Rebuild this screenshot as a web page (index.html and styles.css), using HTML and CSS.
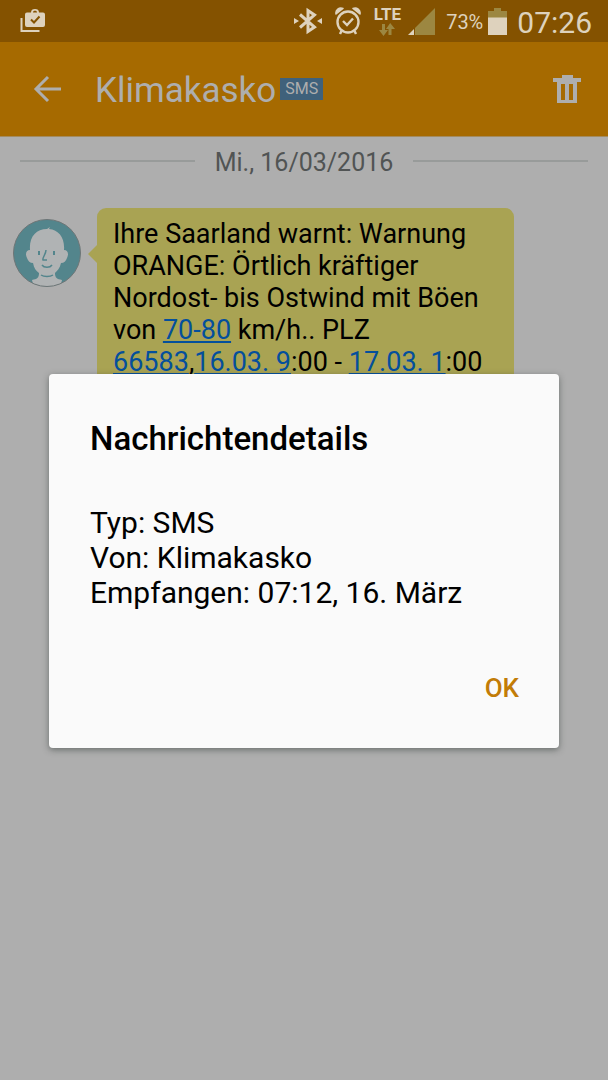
FILE: index.html
```html
<!DOCTYPE html>
<html lang="de">
<head>
    <meta charset="UTF-8">
    <meta name="viewport" content="width=device-width, initial-scale=1.0">
    <title>Klimakasko</title>
    <link rel="stylesheet" href="styles.css">
</head>
<body>
    <div class="status-bar">
        <svg class="icon-store" width="25" height="24" viewBox="0 0 25 24">
            <path d="M1.500 9v13h18" fill="none" stroke="#ded2bd" stroke-width="2"/>
            <path fill="#ded2bd" fill-rule="evenodd" d="M7 3.500h4C11 1 12.500 0 15 0s4 1 4 3.500h4a2 2 0 0 1 2 2V16a2 2 0 0 1-2 2H7a2 2 0 0 1-2-2V5.500a2 2 0 0 1 2-2zM13 3.500h4C17 2.300 16.300 1.700 15 1.700s-2 .6-2 1.800z"/>
            <path d="M11 10.500l3 3 5.500-6" fill="none" stroke="#845200" stroke-width="2"/>
        </svg>
        <div class="status-icons">
            <svg width="28" height="28" viewBox="0 0 28 28">
                <path d="M6 7.500L20.500 20L14 24.500V3.500L20.500 8L6 20.500" fill="none" stroke="#ded2bd" stroke-width="3"/>
                <path d="M0 11l5 3-5 3zM28 11l-5 3 5 3z" fill="#ded2bd"/>
            </svg>
            <svg width="26" height="28" viewBox="0 0 26 28">
                <g fill="none" stroke="#ded2bd">
                    <circle cx="13" cy="15" r="10.500" stroke-width="2.400"/>
                    <path d="M8 14l4 4 6-6.500" stroke-width="2.400"/>
                    <path d="M6.500 24l-1.500 3M19.500 24l1.500 3" stroke-width="2.500"/>
                </g>
                <path d="M1 7A5 5 0 0 1 8 1.500zM25 7A5 5 0 0 0 18 1.500z" fill="#ded2bd" stroke="#ded2bd" stroke-width="1.500" stroke-linejoin="round"/>
            </svg>
            <div class="network">
                <span>LTE</span>
                <svg width="16" height="13" viewBox="0 0 16 13">
                    <path d="M3 1h3v6h3L4.500 13 0 7h3zM9.500 12h3V6H16L11.200 0 7 6h2.500z" fill="#9c8741"/>
                </svg>
            </div>
            <svg class="icon-signal" width="27" height="27" viewBox="0 0 27 27">
                <path d="M27 0v27H7V20z" fill="#9c8741"/>
                <path d="M6 21v6H0z" fill="#ded2bd"/>
            </svg>
            <span class="percent">73%</span>
            <svg class="icon-battery" width="19" height="27" viewBox="0 0 19 27">
                <path d="M6 0h7v3h6v7H0V3h6z" fill="#9c8741"/>
                <path d="M0 9.500h19V27H0z" fill="#ded2bd"/>
            </svg>
            <time class="clock">07:26</time>
        </div>
    </div>

    <header class="top-bar">
        <button class="icon-btn" aria-label="Zurück">
            <svg width="28" height="28" viewBox="0 0 28 28">
                <path d="M15 2L3 14l12 12M3 14h25" fill="none" stroke="#aeaeae" stroke-width="3"/>
            </svg>
        </button>
        <h1>Klimakasko</h1>
        <span class="badge">SMS</span>
        <button class="icon-btn delete" aria-label="Löschen">
            <svg width="28" height="28" viewBox="0 0 28 28">
                <path fill="#aeaeae" fill-rule="evenodd" d="M9 0h11v3h8v4h-4v21H4V7H0V3h9zM8 9v16h4V9zM16 9v16h4V9z"/>
            </svg>
        </button>
    </header>

    <main>
        <div class="date">Mi., 16/03/2016</div>
        <div class="message">
            <svg class="avatar" width="68" height="68" viewBox="0 0 68 68">
                <clipPath id="circle"><circle cx="34" cy="34" r="33.500"/></clipPath>
                <circle cx="34" cy="34" r="33.500" fill="#53858c"/>
                <g clip-path="url(#circle)">
                    <path fill="#b0b3b4" d="M17 31C16 18 23 10 34 10l3-2-1 2c10 1 16 9 15 21 4 0 5 4 3 8-1 3-3 5-6 5-1 5-4 8-6 10 0 5 2 6 7 7l-2 8H21l-2-8c5-1 7-2 7-7-3-2-5-5-6-10-3 0-5-2-6-5-2-4-1-8 3-8z"/>
                </g>
                <path d="M33 31c0 4-4 8-3 10h4M29 46c2 3 8 3 10 0M28 56c3 2 9 2 12 0" fill="none" stroke="#53858c" stroke-width="1.500"/>
                <path d="M26 32v4M41 32v4" stroke="#53858c" stroke-width="2"/>
                <circle cx="34" cy="34" r="33.500" fill="none" stroke="#6e7677"/>
            </svg>
            <p class="bubble">Ihre Saarland warnt: Warnung ORANGE: Örtlich kräftiger Nordost- bis Ostwind mit Böen von <a href="#">70-80</a> km/h.. PLZ <a href="#">66583</a>,<a href="#">16.03. 9</a>:00 - <a href="#">17.03. 1</a>:00</p>
        </div>
    </main>

    <div class="overlay">
        <div class="dialog" role="dialog" aria-labelledby="dialog-title">
            <h2 id="dialog-title">Nachrichtendetails</h2>
            <ul>
                <li>Typ: SMS</li>
                <li>Von: Klimakasko</li>
                <li>Empfangen: 07:12, 16. März</li>
            </ul>
            <button class="ok">OK</button>
        </div>
    </div>
</body>
</html>
```

FILE: styles.css
```css
*{
    margin: 0;
    padding: 0;
    box-sizing: border-box;
}

body{
    background-color: #aeaeae;
    font-family: Roboto, "Liberation Sans", sans-serif;
    color: #000;
    min-height: 100vh;
}

svg{
    display: block;
    flex-shrink: 0;
}

button{
    border: none;
    background: none;
    font-family: inherit;
    cursor: pointer;
}

/* status bar */
.status-bar{
    display: flex;
    justify-content: space-between;
    align-items: center;
    height: 42px;
    padding: 0 16px 0 20px;
    background-color: #845200;
    color: #ded2bd;
}

.status-icons{
    display: flex;
    align-items: center;
    gap: 13px;
}

.network{
    display: flex;
    flex-direction: column;
    align-items: center;
    gap: 2px;
    font-size: 17px;
    line-height: 14px;
    font-weight: 700;
}

.icon-signal{
    margin: 0 2px 0 -6px;
}

.percent{
    font-size: 20px;
    margin: 2px -8px 0 -4px;
}

.clock{
    font-size: 30px;
    margin: 2px 0 0 -3px;
}

/* title bar */
.top-bar{
    display: flex;
    align-items: center;
    height: 95px;
    padding: 0 20px 0 26px;
    background-color: #a66a00;
    border-bottom: 1px solid #a48b5e;
    color: #aeaeae;
}

.icon-btn{
    padding: 7px;
}

.top-bar h1{
    margin: 2px 4px 0 27px;
    font-size: 35px;
    font-weight: 400;
}

.badge{
    padding: 0 5px;
    background-color: #3f617b;
    font-size: 16px;
    line-height: 22px;
}

.delete{
    margin-left: auto;
}

/* conversation */
.date{
    display: flex;
    align-items: center;
    gap: 20px;
    padding: 10px 20px;
    font-size: 25px;
    line-height: 32px;
    color: #515454;
}

.date::before,
.date::after{
    content: "";
    flex: 1;
    height: 2px;
    margin-bottom: 4px;
    background-color: #989b9a;
}

.message{
    display: flex;
    align-items: flex-start;
    gap: 16px;
    padding: 19px 94px 0 13px;
}

.avatar{
    margin-top: 11px;
}

.bubble{
    position: relative;
    flex: 1;
    padding: 10px 16px;
    background-color: #a9a353;
    border-radius: 9px;
    font-size: 27px;
    line-height: 32px;
}

.bubble::before{
    content: "";
    position: absolute;
    left: -9px;
    top: 37px;
    border: 9px solid transparent;
    border-left: none;
    border-right-color: #a9a353;
}

.bubble a{
    color: #044f9c;
}

/* dialog */
.overlay{
    position: absolute;
    top: 42px;
    bottom: 0;
    left: 0;
    right: 0;
    display: flex;
    align-items: center;
    padding: 0 49px;
}

.dialog{
    flex: 1;
    display: flex;
    flex-direction: column;
    padding: 45px 40px 44px 41px;
    background-color: #fafafa;
    border-radius: 4px;
    box-shadow: 0 2px 6px rgba(40, 50, 45, 0.5);
}

.dialog h2{
    font-size: 33px;
    line-height: 40px;
    font-weight: 500;
}

.dialog ul{
    margin: 46px 0 62px;
    list-style: none;
    font-size: 30px;
    line-height: 35px;
}

.ok{
    align-self: flex-end;
    color: #c27c07;
    font-size: 26px;
    line-height: 32px;
    font-weight: 500;
}
```
